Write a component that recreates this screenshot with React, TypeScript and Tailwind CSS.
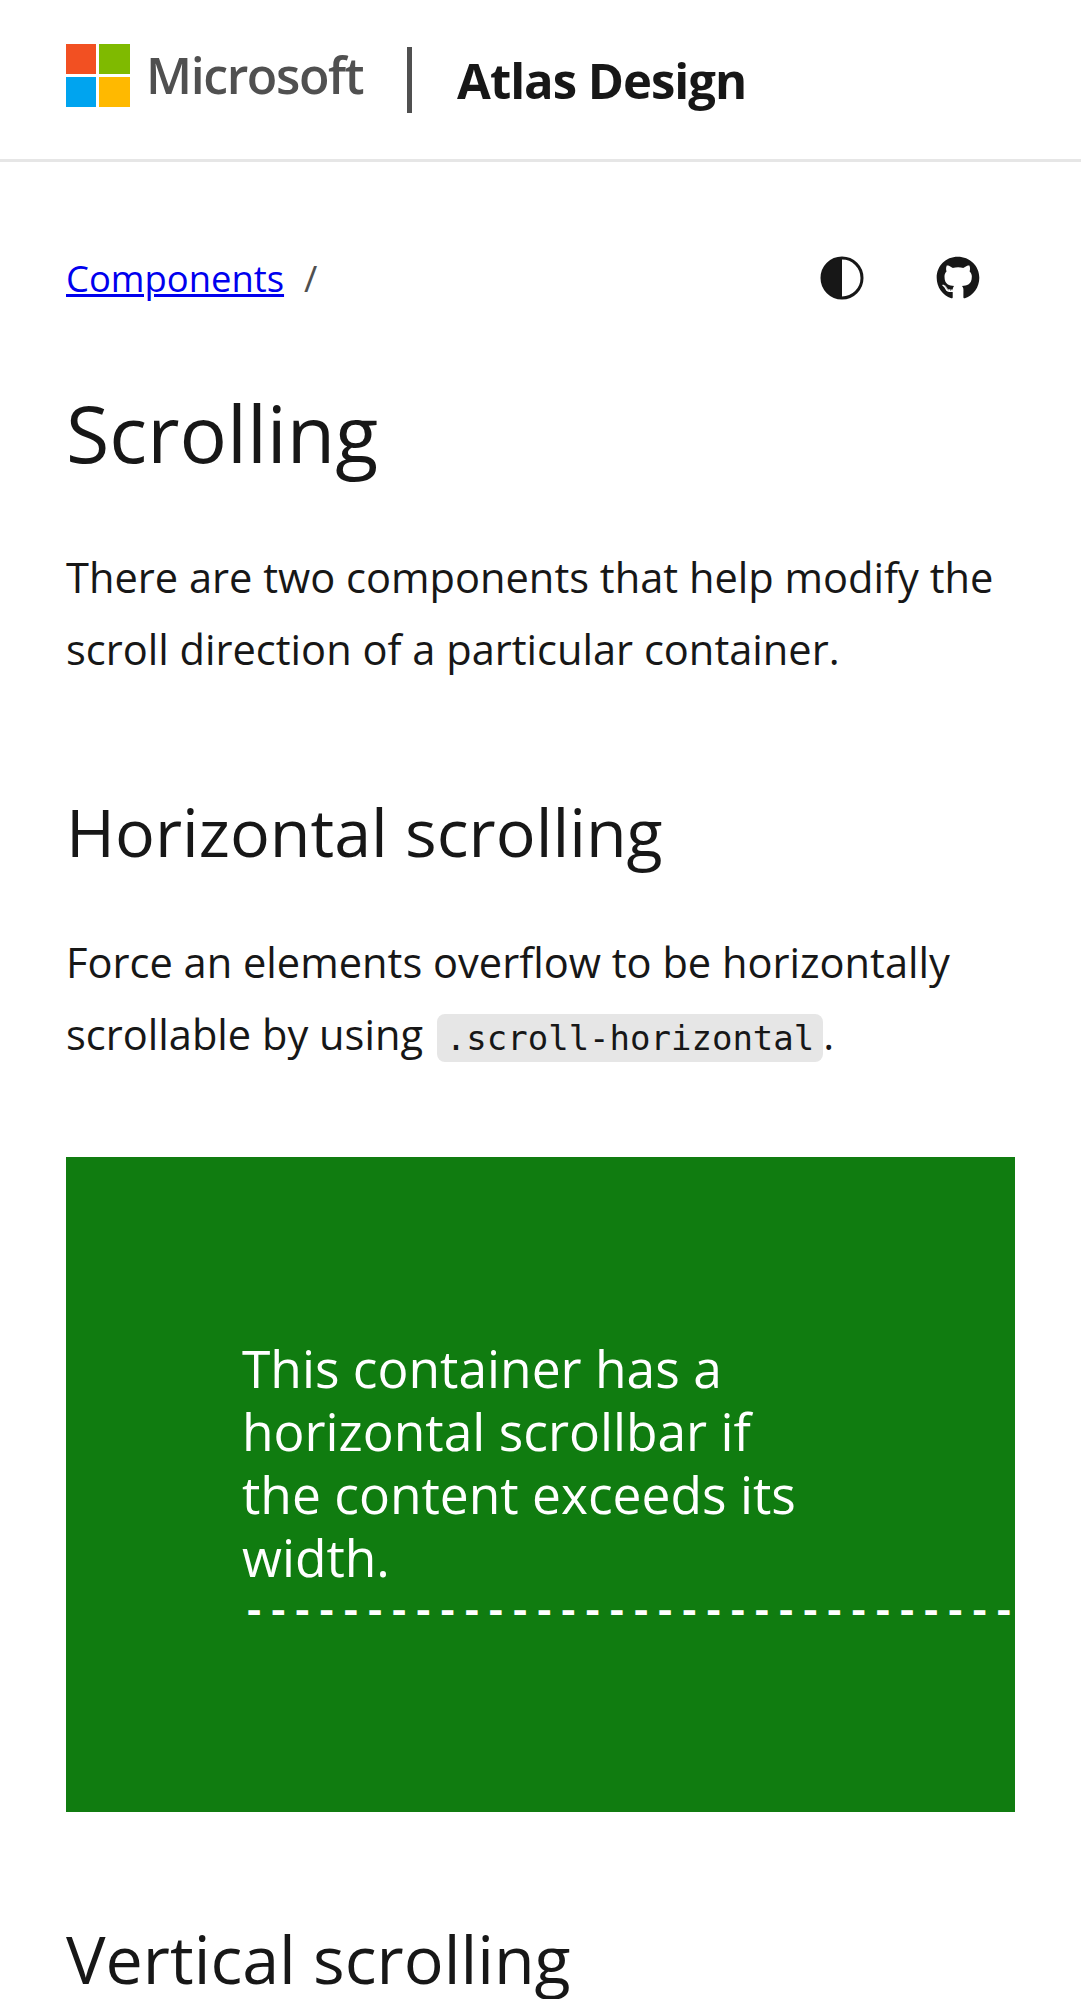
import { FaGithub } from "react-icons/fa";

const sans = "font-['Open_Sans','Noto_Sans',sans-serif]";

export default function App() {
  return (
    <div className={`bg-white text-[#171717] h-[1999px] overflow-hidden ${sans}`}>
      <header className="h-[162px] border-b-[3px] border-[#e6e6e6] px-[66px] pt-[44px] flex items-start">
        <svg width="64" height="63" viewBox="0 0 64 63" className="shrink-0">
          <rect width="30" height="30" fill="#f25022" />
          <rect x="33" width="31" height="30" fill="#7fba00" />
          <rect y="33" width="30" height="30" fill="#00a4ef" />
          <rect x="33" y="33" width="31" height="30" fill="#ffb900" />
        </svg>
        <span className="ml-4 text-[50px] leading-[63px] font-semibold tracking-[-1.4px] text-[#505050]">Microsoft</span>
        <span className="ml-[44px] w-[5px] h-[66px] bg-[#505050] mt-[3px]" />
        <span className="ml-[45px] text-[49px] leading-[72px] font-bold tracking-[-1px] text-[#171717]">Atlas Design</span>
      </header>
      <main className="px-[66px]">
        <div className="flex items-center h-[56px] mt-[88px]">
          <a className="text-[36.4px] text-[#0000ee] underline">Components</a>
          <span className="ml-5 text-[36.4px] text-[#505050]">/</span>
          <svg width="44" height="44" viewBox="0 0 44 44" className="ml-auto mr-[72px]">
            <circle cx="22" cy="22" r="20" fill="none" stroke="#171717" strokeWidth="3" />
            <path d="M22 2a20 20 0 0 0 0 40z" fill="#171717" />
          </svg>
          <FaGithub className="mr-[35px] text-[#171717] text-[44px]" />
        </div>
        <h1 className="mt-[77px] text-[79px] leading-[100px] font-normal">Scrolling</h1>
        <p className="mt-[58px] text-[41.6px] leading-[72px]">There are two components that help modify the scroll direction of a particular container.</p>
        <h2 className="mt-[103px] text-[66.4px] leading-[86px]">Horizontal scrolling</h2>
        <p className="mt-[52px] text-[41.6px] leading-[72px]">
          Force an elements overflow to be horizontally scrollable by using{" "}
          <code className="ml-[3px] bg-[#e6e6e6] rounded-[8px] px-[9px] py-1 text-[34px] font-['DejaVu_Sans_Mono',monospace]">.scroll-horizontal</code>.
        </p>
        <div className="mt-[83px] h-[655px] w-[949px] bg-[#107c10] text-white overflow-hidden pt-[180px] pl-[176px]">
          <p className="w-[580px] text-[51.5px] leading-[63px]">This container has a horizontal scrollbar if the content exceeds its width.</p>
          <p className="whitespace-nowrap font-['Liberation_Mono',monospace] font-bold text-[40.3px] leading-[47px]">{"-".repeat(34)}</p>
        </div>
        <h2 className="mt-[103px] text-[66.4px] leading-[86px]">Vertical scrolling</h2>
      </main>
    </div>
  );
}
